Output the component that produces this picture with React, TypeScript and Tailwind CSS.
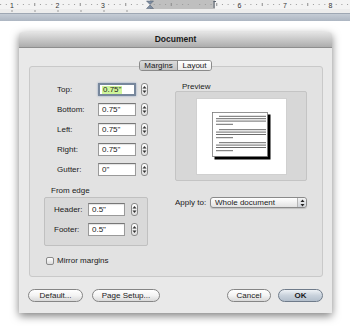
import React from "react";

function Stepper() {
  return (
    <div className="w-[7px] h-[13px] rounded-[3px] border border-[#8a8a8a] bg-gradient-to-b from-white to-[#dedede] flex items-center justify-center shrink-0">
      <svg width="5" height="9" viewBox="0 0 5 9">
        <polygon points="2.5,1 4.5,3.6 0.5,3.6" fill="#333" />
        <polygon points="0.5,5.4 4.5,5.4 2.5,8" fill="#333" />
      </svg>
    </div>
  );
}

function Field({ value, focused, w = "w-[38px]" }: { value: string; focused?: boolean; w?: string }) {
  if (focused) {
    return (
      <div className={`${w} h-[13px] bg-white border-2 border-[#77879c] shadow-[0_0_2px_rgba(90,120,170,0.6)] flex items-center pl-[2px] text-[8px] leading-none shrink-0`}>
        <span className="bg-[#cff59b] px-[1px]">{value}</span>
      </div>
    );
  }
  return (
    <div className={`${w} h-[13px] bg-white border border-[#9a9a9a] border-t-[#777] shadow-[inset_0_1px_1px_rgba(0,0,0,0.12)] flex items-center pl-[3px] text-[8px] leading-none shrink-0`}>
      {value}
    </div>
  );
}

function Row({ label, value, focused }: { label: string; value: string; focused?: boolean }) {
  return (
    <div className="flex items-center h-[13px] pl-[13px]">
      <div className="w-[41px] text-[8px] leading-none">{label}</div>
      <Field value={value} focused={focused} />
      <div className="ml-[5px]">
        <Stepper />
      </div>
    </div>
  );
}

function EdgeRow({ label, value }: { label: string; value: string }) {
  return (
    <div className="flex items-center h-[13px] pl-[9px]">
      <div className="w-[34px] text-[8px] leading-none">{label}</div>
      <Field value={value} w="w-[37px]" />
      <div className="ml-[6px]">
        <Stepper />
      </div>
    </div>
  );
}

function Btn({ label, w, primary }: { label: string; w: string; primary?: boolean }) {
  return (
    <div
      className={`${w} h-[13px] rounded-full border flex items-center justify-center text-[8px] leading-none ${
        primary
          ? "border-[#6f7b8a] bg-gradient-to-b from-[#eef2f6] via-[#c9d2dc] to-[#b3bfcc] font-bold"
          : "border-[#858585] bg-gradient-to-b from-white via-[#f3f3f3] to-[#d9d9d9]"
      }`}
    >
      {label}
    </div>
  );
}

function Ruler() {
  const inch = 45.5;
  const start = 12;
  const nums = [1, 2, 3, 4, 5, 6, 7, 8];
  const dots: number[] = [];
  for (let i = -2; i < 64; i++) {
    const x = start + (inch / 8) * i;
    if (i % 8 !== 0 && x > 0 && x < 350) dots.push(x);
  }
  return (
    <svg width="350" height="21" viewBox="0 0 350 21" className="block">
      <defs>
        <linearGradient id="bar" x1="0" y1="0" x2="0" y2="1">
          <stop offset="0" stopColor="#c8cfd8" />
          <stop offset="1" stopColor="#adb6c2" />
        </linearGradient>
      </defs>
      <rect x="0" y="0" width="350" height="9" fill="#f3f3f3" />
      <rect x="150" y="0" width="65" height="9" fill="#bfbfbf" />
      {dots.map((x, i) => {
        const half = Math.round((x - start) / (inch / 8)) % 4 === 0;
        return half ? (
          <rect key={i} x={x - 0.5} y="3" width="1" height="3" fill="#8a8a8a" />
        ) : (
          <rect key={i} x={x - 0.5} y="4" width="1" height="1" fill="#9a9a9a" />
        );
      })}
      {nums.map((n) => {
        const x = start + inch * (n - 1);
        if (n === 4 || n === 5) return null;
        return (
          <g key={n}>
            <rect x={x - 3} y="0.5" width="6" height="8" fill="#f3f3f3" />
            <text x={x} y="7.5" fontSize="7" textAnchor="middle" fill="#333" fontFamily="Liberation Sans, Arial, sans-serif">
              {n}
            </text>
          </g>
        );
      })}
      <path d="M146.5 1 L153.5 1 L150 4.5 Z M146.5 8.5 L153.5 8.5 L150 5 Z" fill="#7d8da3" stroke="#4f5b6b" strokeWidth="0.5" />
      <rect x="213.5" y="1" width="1" height="7" fill="#5b6470" />
      <rect x="213.5" y="1" width="2.5" height="1" fill="#5b6470" />
      <rect x="0" y="9" width="350" height="4" fill="#ececec" />
      {[0, 1, 2, 3, 4, 5].map((k) => (
        <rect key={k} x={start + 23 * k - 0.5} y="10" width="1" height="2" fill="#9a9a9a" />
      ))}
      <rect x="0" y="13" width="350" height="8" fill="url(#bar)" />
      <rect x="0" y="13" width="350" height="1" fill="#9ea7b3" />
    </svg>
  );
}

function DocIcon() {
  const paras = [4.3, 17.7, 30.7];
  return (
    <svg width="59" height="48" viewBox="0 0 59 48">
      <rect x="2.5" y="2.5" width="56" height="45" fill="#000" />
      <rect x="0.5" y="0.5" width="55" height="44" fill="#fff" stroke="#7a7a7a" strokeWidth="0.8" />
      {paras.map((y, i) => (
        <g key={i} stroke="#5a5a5a" strokeWidth="0.9">
          <line x1="7" y1={y} x2="54" y2={y} />
          <line x1="4" y1={y + 2.4} x2="54" y2={y + 2.4} />
          <line x1="4" y1={y + 4.8} x2="54" y2={y + 4.8} />
          <line x1="4" y1={y + 8} x2="21" y2={y + 8} />
        </g>
      ))}
    </svg>
  );
}

export default function App() {
  return (
    <div className="w-[350px] h-[327px] bg-white overflow-hidden text-[#1a1a1a] font-['Liberation_Sans',Arial,sans-serif]">
      <Ruler />
      <div className="ml-[19px] mt-[11px] w-[313px] rounded-t-[4px] shadow-[0_3px_9px_rgba(0,0,0,0.5)] bg-[#e9e9e9]">
        <div className="h-[16px] rounded-t-[4px] bg-gradient-to-b from-[#e4e4e4] to-[#adadad] border-b border-[#8e8e8e] flex items-center justify-center text-[8.5px] font-bold leading-none">
          Document
        </div>
        <div className="h-[265px] flex flex-col pt-[12px]">
          <div className="relative z-10 flex justify-center">
            <div className="flex h-[11px] border border-[#8a8a8a] rounded-[3px] overflow-hidden text-[8px] leading-none">
              <div className="w-[38px] flex items-center justify-center bg-gradient-to-b from-[#dcdcdc] to-[#c4c4c4] border-r border-[#8a8a8a]">
                Margins
              </div>
              <div className="w-[33px] flex items-center justify-center bg-gradient-to-b from-white to-[#ececec]">
                Layout
              </div>
            </div>
          </div>
          <div className="ml-[10px] mr-[9px] -mt-[5px] h-[211px] border border-[#c9c9c9] rounded-[3px] bg-[#e2e2e2] flex pt-[16px]">
            <div className="w-[145px] pl-[14px] flex flex-col">
              <div className="flex flex-col gap-[7px]">
                <Row label="Top:" value={'0.75"'} focused />
                <Row label="Bottom:" value={'0.75"'} />
                <Row label="Left:" value={'0.75"'} />
                <Row label="Right:" value={'0.75"'} />
                <Row label="Gutter:" value={'0"'} />
              </div>
              <div className="mt-[10px] h-[10px] leading-[10px] text-[8px] pl-[7px]">From edge</div>
              <div className="mt-[1px] w-[104px] h-[49px] border border-[#c0c0c0] rounded-[2px] bg-[#d9d9d9] pt-[5px] flex flex-col gap-[7px]">
                <EdgeRow label="Header:" value={'0.5"'} />
                <EdgeRow label="Footer:" value={'0.5"'} />
              </div>
              <div className="mt-[11px] h-[8px] flex items-center ml-[2px]">
                <div className="w-[8px] h-[8px] rounded-[2px] border border-[#8a8a8a] bg-gradient-to-b from-white to-[#dcdcdc] shrink-0" />
                <div className="ml-[3px] text-[8px] leading-none">Mirror margins</div>
              </div>
            </div>
            <div className="w-[132px] -mt-[1px] flex flex-col">
              <div className="pl-[7px] h-[9px] leading-[9px] text-[8px]">Preview</div>
              <div className="h-[90px] border border-[#c4c4c4] rounded-[2px] bg-[#d7d7d7] flex items-center justify-center">
                <div className="w-[91px] h-[77px] bg-white border border-[#d0d0d0] flex items-center justify-center">
                  <DocIcon />
                </div>
              </div>
              <div className="mt-[16px] h-[11px] flex items-center">
                <div className="w-[35px] text-[8px] leading-none">Apply to:</div>
                <div className="w-[97px] h-[11px] rounded-[3px] border border-[#8a8a8a] bg-gradient-to-b from-white to-[#e2e2e2] flex items-center shadow-[0_1px_1px_rgba(0,0,0,0.15)]">
                  <div className="flex-1 pl-[4px] text-[8px] leading-none font-medium">Whole document</div>
                  <div className="w-[9px] h-full flex items-center justify-center border-l border-[#b5b5b5] bg-gradient-to-b from-[#f3f3f3] to-[#cfd3d8] rounded-r-[3px]">
                    <svg width="5" height="8" viewBox="0 0 5 8">
                      <polygon points="2.5,0.5 4.5,3 0.5,3" fill="#222" />
                      <polygon points="0.5,5 4.5,5 2.5,7.5" fill="#222" />
                    </svg>
                  </div>
                </div>
              </div>
            </div>
          </div>
          <div className="mt-[12px] px-[9px] flex items-center">
            <Btn label="Default..." w="w-[55px]" />
            <div className="ml-[9px]">
              <Btn label="Page Setup..." w="w-[68px]" />
            </div>
            <div className="flex-1" />
            <Btn label="Cancel" w="w-[44px]" />
            <div className="ml-[7px]">
              <Btn label="OK" w="w-[45px]" primary />
            </div>
          </div>
        </div>
      </div>
    </div>
  );
}
